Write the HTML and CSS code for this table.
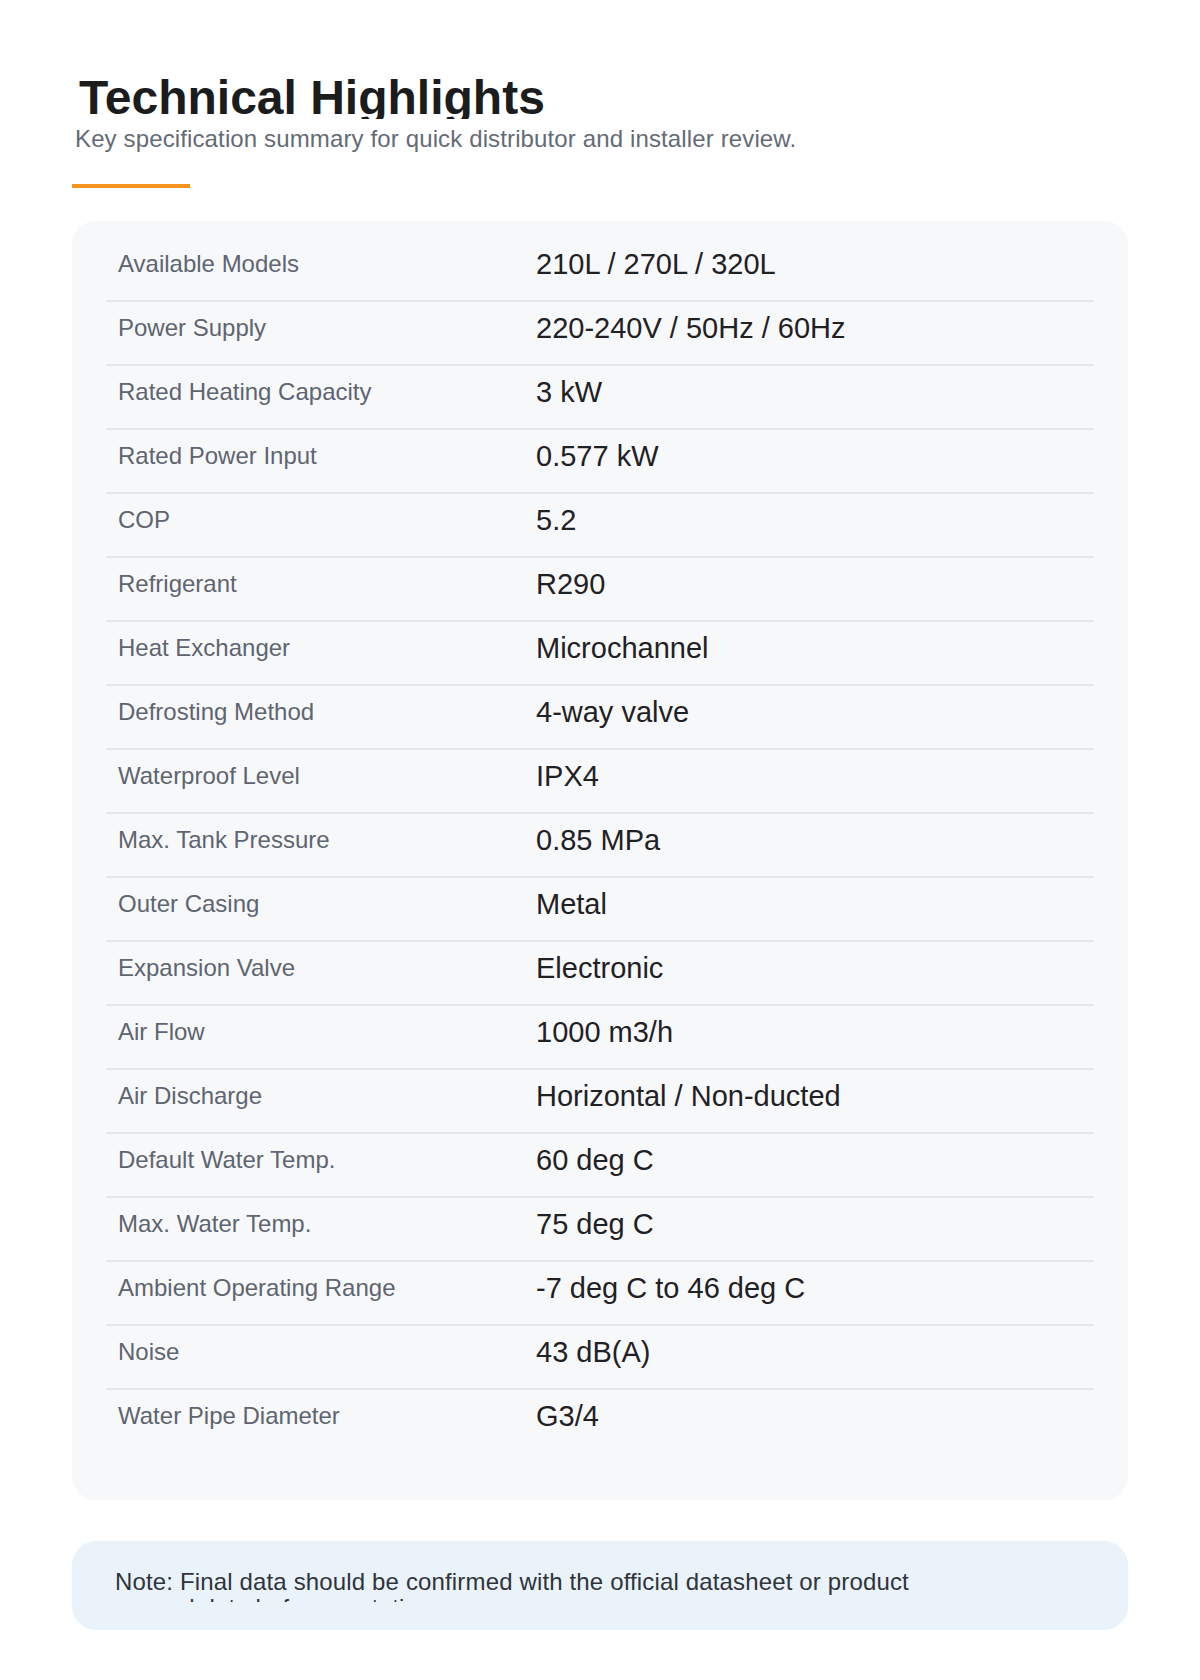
FILE: index.html
```html
<!DOCTYPE html>
<html>
<head>
<title>Technical Highlights</title>
<meta charset="utf-8">
<link rel="stylesheet" href="styles.css">
</head>
<body>
  <div class="page">
    <h1 class="title">Technical Highlights</h1>
    <p class="subtitle">Key specification summary for quick distributor and installer review.</p>
    <div class="accent"></div>

    <div class="specs">
      <div class="spec-row"><span class="label">Available Models</span><span class="value">210L / 270L / 320L</span></div>
      <div class="spec-row"><span class="label">Power Supply</span><span class="value">220-240V / 50Hz / 60Hz</span></div>
      <div class="spec-row"><span class="label">Rated Heating Capacity</span><span class="value">3 kW</span></div>
      <div class="spec-row"><span class="label">Rated Power Input</span><span class="value">0.577 kW</span></div>
      <div class="spec-row"><span class="label">COP</span><span class="value">5.2</span></div>
      <div class="spec-row"><span class="label">Refrigerant</span><span class="value">R290</span></div>
      <div class="spec-row"><span class="label">Heat Exchanger</span><span class="value">Microchannel</span></div>
      <div class="spec-row"><span class="label">Defrosting Method</span><span class="value">4-way valve</span></div>
      <div class="spec-row"><span class="label">Waterproof Level</span><span class="value">IPX4</span></div>
      <div class="spec-row"><span class="label">Max. Tank Pressure</span><span class="value">0.85 MPa</span></div>
      <div class="spec-row"><span class="label">Outer Casing</span><span class="value">Metal</span></div>
      <div class="spec-row"><span class="label">Expansion Valve</span><span class="value">Electronic</span></div>
      <div class="spec-row"><span class="label">Air Flow</span><span class="value">1000 m3/h</span></div>
      <div class="spec-row"><span class="label">Air Discharge</span><span class="value">Horizontal / Non-ducted</span></div>
      <div class="spec-row"><span class="label">Default Water Temp.</span><span class="value">60 deg C</span></div>
      <div class="spec-row"><span class="label">Max. Water Temp.</span><span class="value">75 deg C</span></div>
      <div class="spec-row"><span class="label">Ambient Operating Range</span><span class="value">-7 deg C to 46 deg C</span></div>
      <div class="spec-row"><span class="label">Noise</span><span class="value">43 dB(A)</span></div>
      <div class="spec-row"><span class="label">Water Pipe Diameter</span><span class="value">G3/4</span></div>
    </div>

    <div class="note">
      <p>Note: Final data should be confirmed with the official datasheet or product manual data before quotation.</p>
    </div>
  </div>
</body>
</html>
```

FILE: styles.css
```css
body {margin: 0; background-color: #ffffff;
      font-family: "Liberation Sans", Arial, sans-serif;
}
.page {padding: 74px 72px 40px;}

.title {margin: 0; padding-left: 7px;
        font-size: 48px; font-weight: bold; line-height: 48px;
        height: 45px; overflow: hidden;
        color: #1b1c1e;
}
.subtitle {margin: 2px 0 0; padding-left: 3px;
           font-size: 24px; line-height: 36px; letter-spacing: 0.13px;
           color: #646b75;
}
.accent {width: 118px; height: 4px; margin-top: 27px;
         background-color: #f7941d;
}

.specs {margin-top: 33px; padding: 17px 34px 48px;
        border-radius: 24px;
        background-color: #f7f8fa;
}
.spec-row {display: grid; grid-template-columns: 418px 1fr; align-items: center;
           padding: 8px 12px 18px;
           border-bottom: 2px solid #e4e7eb;
}
.spec-row:last-child {border-bottom: none;}
.label {font-size: 24px; line-height: 36px; color: #5e6570;}
.value {font-size: 29px; line-height: 36px; color: #1f2125;}

.note {margin-top: 41px; padding: 28px 43px;
       border-radius: 24px;
       background-color: #eaf2fa;
}
.note p {margin: 0; max-width: 800px; height: 33px; overflow: hidden;
         font-size: 24px; line-height: 1.1; letter-spacing: 0.15px;
         color: #30343b;
}
```
